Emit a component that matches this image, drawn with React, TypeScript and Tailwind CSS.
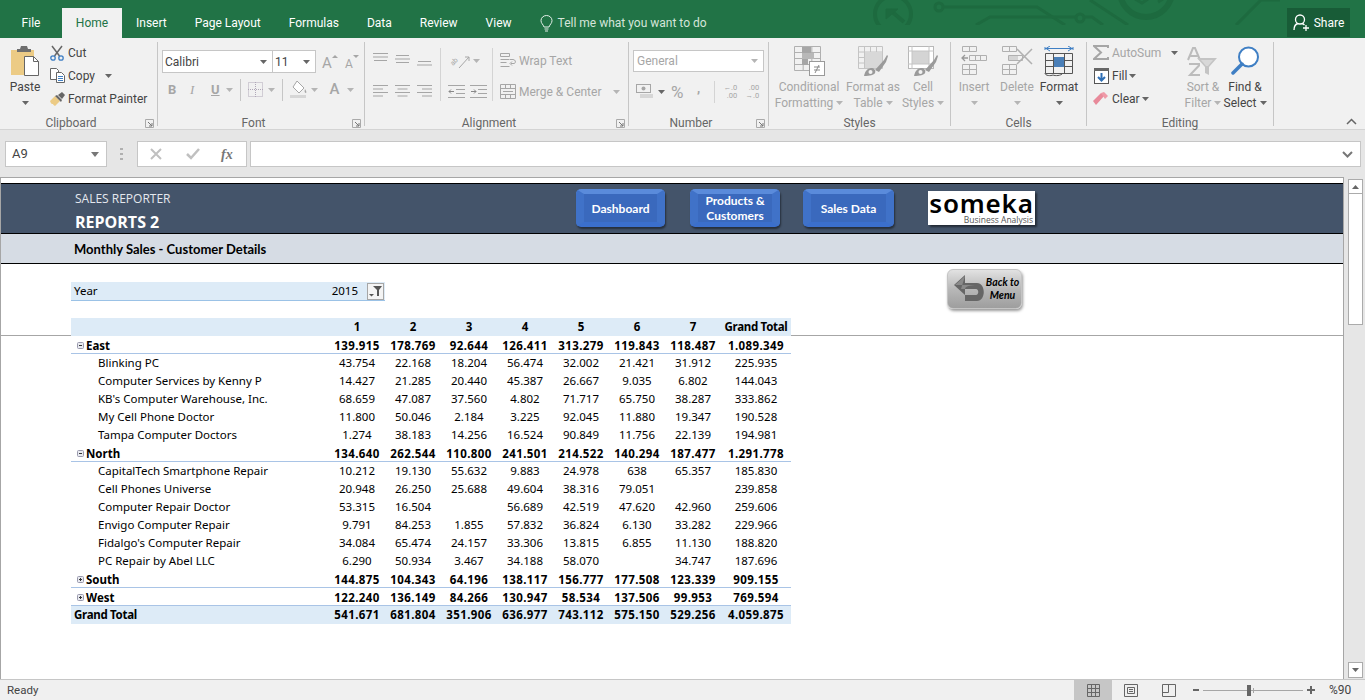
import type { ReactNode } from "react"

type Row = { name: string; vals: string[]; total: string; kind: "region" | "item"; open?: boolean }

const rows: Row[] = [
  { name: "East", vals: ["139.915", "178.769", "92.644", "126.411", "313.279", "119.843", "118.487"], total: "1.089.349", kind: "region", open: true },
  { name: "Blinking PC", vals: ["43.754", "22.168", "18.204", "56.474", "32.002", "21.421", "31.912"], total: "225.935", kind: "item" },
  { name: "Computer Services by Kenny P", vals: ["14.427", "21.285", "20.440", "45.387", "26.667", "9.035", "6.802"], total: "144.043", kind: "item" },
  { name: "KB's Computer Warehouse, Inc.", vals: ["68.659", "47.087", "37.560", "4.802", "71.717", "65.750", "38.287"], total: "333.862", kind: "item" },
  { name: "My Cell Phone Doctor", vals: ["11.800", "50.046", "2.184", "3.225", "92.045", "11.880", "19.347"], total: "190.528", kind: "item" },
  { name: "Tampa Computer Doctors", vals: ["1.274", "38.183", "14.256", "16.524", "90.849", "11.756", "22.139"], total: "194.981", kind: "item" },
  { name: "North", vals: ["134.640", "262.544", "110.800", "241.501", "214.522", "140.294", "187.477"], total: "1.291.778", kind: "region", open: true },
  { name: "CapitalTech Smartphone Repair", vals: ["10.212", "19.130", "55.632", "9.883", "24.978", "638", "65.357"], total: "185.830", kind: "item" },
  { name: "Cell Phones Universe", vals: ["20.948", "26.250", "25.688", "49.604", "38.316", "79.051", ""], total: "239.858", kind: "item" },
  { name: "Computer Repair Doctor", vals: ["53.315", "16.504", "", "56.689", "42.519", "47.620", "42.960"], total: "259.606", kind: "item" },
  { name: "Envigo Computer Repair", vals: ["9.791", "84.253", "1.855", "57.832", "36.824", "6.130", "33.282"], total: "229.966", kind: "item" },
  { name: "Fidalgo's Computer Repair", vals: ["34.084", "65.474", "24.157", "33.306", "13.815", "6.855", "11.130"], total: "188.820", kind: "item" },
  { name: "PC Repair by Abel LLC", vals: ["6.290", "50.934", "3.467", "34.188", "58.070", "", "34.747"], total: "187.696", kind: "item" },
  { name: "South", vals: ["144.875", "104.343", "64.196", "138.117", "156.777", "177.508", "123.339"], total: "909.155", kind: "region" },
  { name: "West", vals: ["122.240", "136.149", "84.266", "130.947", "58.534", "137.506", "99.953"], total: "769.594", kind: "region" },
]

const grandTotal = ["541.671", "681.804", "351.906", "636.977", "743.112", "575.150", "529.256"]

function Caret({ dark }: { dark?: boolean }) {
  return (
    <svg width="7" height="4" viewBox="0 0 7 4" className="shrink-0">
      <path d="M0 0h7L3.500 4z" fill={dark ? "#666" : "#b5b5b5"} />
    </svg>
  )
}

function Group({ width, label, launcher, children }: { width: string; label: string; launcher?: boolean; children: ReactNode }) {
  return (
    <div className={`${width} h-[84px] mt-1 shrink-0 flex flex-col border-r border-[#c6c6c6]`}>
      <div className="h-[77px] flex">{children}</div>
      <div className="h-[7px] flex items-center relative">
        <span className={`w-full text-center text-[12px] leading-4 text-[#666] ${launcher ? "pr-[15px]" : ""}`}>{label}</span>
        {launcher && (
          <svg width="9" height="9" viewBox="0 0 9 9" className="absolute right-[3px] top-0">
            <path d="M.5 8.500V.5h8v8z" fill="none" stroke="#aaa" />
            <path d="M3 3l4 4M7 4v3H4" fill="none" stroke="#777" />
          </svg>
        )}
      </div>
    </div>
  )
}

function Big({ width, icon, lines, on }: { width: string; icon: ReactNode; lines: string[]; on?: boolean }) {
  return (
    <div className={`${width} shrink-0 flex flex-col items-center ${on ? "text-[#444]" : "text-[#a6a6a6]"}`}>
      <div className="h-[33px] mt-[4px] flex items-start justify-center">{icon}</div>
      <div className="text-[12px] leading-4 whitespace-nowrap">{lines[0]}</div>
      {lines[1] ? (
        <div className="text-[12px] leading-4 whitespace-nowrap flex items-center gap-[3px]">
          {lines[1]}
          <Caret dark={on} />
        </div>
      ) : (
        <div className="h-4 flex items-center"><Caret dark={on} /></div>
      )}
    </div>
  )
}

function AlignIcon({ widths, align }: { widths: number[]; align: "l" | "c" | "r" }) {
  return (
    <svg width="15" height={widths.length * 3.5} viewBox={`0 0 15 ${widths.length * 3.5}`}>
      {widths.map((w, i) => {
        const x = align === "c" ? (15 - w) / 2 : align === "r" ? 15 - w : 0
        return <rect key={i} x={x} y={i * 3.5} width={w} height="1" fill="#a6a6a6" />
      })}
    </svg>
  )
}

function GridIcon({ w, h, cols, rows: r, color = "#b0b0b0" }: { w: number; h: number; cols: number; rows: number; color?: string }) {
  const lines = []
  for (let i = 0; i <= cols; i++) lines.push(`M${0.5 + (i * (w - 1)) / cols} .5V${h - 0.5}`)
  for (let i = 0; i <= r; i++) lines.push(`M.5 ${0.5 + (i * (h - 1)) / r}H${w - 0.5}`)
  return <path d={lines.join("")} fill="none" stroke={color} />
}

function Brush() {
  return (
    <g>
      <path d="M17 24l9-10 3-5 1 1-2 6-7 10z" fill="#9a9a9a" />
      <path d="M6 30c1-4 2-7 7-8 3 0 5 2 4 5-1 2-5 3-11 3z" fill="#9a9a9a" />
      <circle cx="12.500" cy="26" r="2" fill="#f1f1f1" />
    </g>
  )
}

function RibbonBar() {
  return (
    <div className="h-[92px] bg-[#f1f1f1] flex border-b border-[#d4d4d4] text-[#444]">
      <Group width="w-[158px]" label="Clipboard" launcher>
        <div className="w-[50px] shrink-0 flex flex-col items-center">
          <svg width="30" height="30" viewBox="0 0 30 30" className="mt-[4px]">
            <path d="M1 4h23v25H1z" fill="#eccb85" />
            <path d="M7 3h3l1-3h6l1 3h3v3H7z" fill="#6e6e6e" />
            <path d="M14.500 10.500h9l5 5v14h-14z" fill="#fff" stroke="#666" />
            <path d="M23.500 10.500v5h5" fill="none" stroke="#666" />
          </svg>
          <div className="text-[12px] leading-4 mt-[3px]">Paste</div>
          <div className="mt-[6px]"><Caret dark /></div>
        </div>
        <div className="flex flex-col text-[12px] leading-4 -mt-px">
          <div className="h-[23px] flex items-center gap-[4px]">
            <svg width="14" height="16" viewBox="0 0 14 16">
              <path d="M2 1l7.500 10M12 1L4.500 11" stroke="#666" strokeWidth="1.500" fill="none" />
              <circle cx="3" cy="13" r="2.200" fill="none" stroke="#3f7fc4" strokeWidth="1.300" />
              <circle cx="11" cy="13" r="2.200" fill="none" stroke="#3f7fc4" strokeWidth="1.300" />
            </svg>
            Cut
          </div>
          <div className="h-[23px] flex items-center gap-[3px]">
            <svg width="15" height="15" viewBox="0 0 15 15">
              <path d="M.5.5h6l2 2v9H.5z" fill="#fff" stroke="#666" />
              <path d="M6.500 4.500h5l3 3v7h-8z" fill="#fff" stroke="#666" />
              <path d="M8 8.500h5M8 10.500h5M8 12.500h5" stroke="#3f7fc4" />
            </svg>
            Copy
            <span className="ml-[7px]"><Caret dark /></span>
          </div>
          <div className="h-[23px] flex items-center gap-[3px] whitespace-nowrap">
            <svg width="15" height="14" viewBox="0 0 15 14">
              <path d="M0 9l5-5 5 5-5 5c-1-1-2-1-2-2-1 0-2 0-3-3z" fill="#eccb85" />
              <path d="M5 4l2-1 5 5-1 2z" fill="#666" />
              <path d="M8 3l4-3 3 3-3 4z" fill="#666" />
            </svg>
            Format Painter
          </div>
        </div>
      </Group>

      <Group width="w-[207px]" label="Font" launcher>
        <div className="flex flex-col pl-1 text-[#a6a6a6]">
          <div className="h-[23px] mt-[8px] flex items-center">
            <div className="w-[111px] h-[23px] bg-white border border-[#c6c6c6] flex items-center justify-between pl-[2px] pr-[5px] text-[12px] text-[#444]">
              Calibri <Caret dark />
            </div>
            <div className="w-[44px] h-[23px] -ml-[1px] bg-white border border-[#c6c6c6] flex items-center justify-between pl-[2px] pr-[5px] text-[12px] text-[#444]">
              11 <Caret dark />
            </div>
            <svg width="40" height="20" viewBox="0 0 40 20" className="ml-[5px]">
              <text x="1" y="16" fontSize="15" fill="#a6a6a6" fontFamily="Roboto, sans-serif">A</text>
              <path d="M11 6l3-3 3 3z" fill="#a6a6a6" />
              <text x="24" y="16" fontSize="12" fill="#a6a6a6" fontFamily="Roboto, sans-serif">A</text>
              <path d="M32 3h6l-3 3z" fill="#a6a6a6" />
            </svg>
          </div>
          <div className="h-[23px] mt-[5px] flex items-center text-[#a6a6a6]">
            <span className="w-[13px] ml-[6px] text-[13px] font-bold">B</span>
            <span className="w-[13px] ml-[9px] text-[13px] italic" style={{ fontFamily: "Liberation Serif, serif" }}>I</span>
            <span className="ml-[8px] text-[13px] font-bold underline">U</span>
            <span className="ml-[6px]"><Caret /></span>
            <div className="w-px h-[22px] bg-[#c6c6c6] ml-[7px]" />
            <svg width="15" height="15" viewBox="0 0 15 15" className="ml-[7px]">
              <rect x=".5" y=".5" width="14" height="14" fill="none" stroke="#b0a8b8" strokeDasharray="1 1" />
              <path d="M7.500 0v15M0 7.500h15" stroke="#b0a8b8" strokeDasharray="1 1" />
            </svg>
            <span className="ml-[5px]"><Caret /></span>
            <div className="w-px h-[22px] bg-[#c6c6c6] ml-[7px]" />
            <svg width="17" height="19" viewBox="0 0 17 19" className="ml-[7px]">
              <path d="M7 1l7 7-5 5-6-6z" fill="#fff" stroke="#a6a6a6" />
              <path d="M15 9c1 2 2 3 1 4-1 0-2-1-1-4z" fill="#a6a6a6" />
              <rect y="15" width="16" height="3" fill="#d6d6d6" />
            </svg>
            <span className="ml-[4px]"><Caret /></span>
            <span className="ml-[12px] text-[15px] font-medium">A</span>
            <span className="ml-[7px]"><Caret /></span>
          </div>
        </div>
      </Group>

      <Group width="w-[264px]" label="Alignment" launcher>
        <div className="w-[75px] shrink-0 pl-2 flex flex-col">
          <div className="h-[17px] mt-[10px] flex items-center gap-[7px]">
            <div className="h-[15px] flex items-start"><AlignIcon widths={[15, 15, 13]} align="c" /></div>
            <div className="h-[15px] flex items-center"><AlignIcon widths={[13, 15, 13]} align="c" /></div>
            <div className="h-[15px] flex items-end"><AlignIcon widths={[13, 15]} align="c" /></div>
          </div>
          <div className="h-[17px] mt-[14px] flex items-center gap-[7px]">
            <AlignIcon widths={[15, 10, 15, 10]} align="l" />
            <AlignIcon widths={[15, 10, 15, 10]} align="c" />
            <AlignIcon widths={[15, 10, 15, 10]} align="r" />
          </div>
        </div>
        <div className="w-px h-[53px] mt-[6px] bg-[#d4d4d4]" />
        <div className="w-[51px] shrink-0 pl-[7px] flex flex-col">
          <div className="h-[17px] mt-[10px] flex items-center gap-[3px]">
            <svg width="22" height="18" viewBox="0 0 22 18">
              <text x="2" y="11" fontSize="7" fill="#a6a6a6" transform="rotate(-45 7 9)" fontFamily="Roboto, sans-serif">ab</text>
              <path d="M11 16L21 5M17 5h4v4" fill="none" stroke="#a6a6a6" />
            </svg>
            <Caret />
          </div>
          <div className="h-[17px] mt-[14px] flex items-center gap-[5px]">
            <svg width="17" height="13" viewBox="0 0 17 13"><path d="M0 .5h17M8 4.500h9M8 8.500h9M0 12.500h17" stroke="#a6a6a6" /><path d="M6 6.500H1M3 4.500l-2 2 2 2" fill="none" stroke="#888" /></svg>
            <svg width="17" height="13" viewBox="0 0 17 13"><path d="M0 .5h17M8 4.500h9M8 8.500h9M0 12.500h17" stroke="#a6a6a6" /><path d="M1 6.500h5M4 4.500l2 2-2 2" fill="none" stroke="#888" /></svg>
          </div>
        </div>
        <div className="w-px h-[53px] mt-[6px] bg-[#d4d4d4]" />
        <div className="pl-[7px] flex flex-col text-[#a6a6a6] text-[12px]">
          <div className="h-[17px] mt-[10px] flex items-center gap-[3px] whitespace-nowrap">
            <svg width="16" height="15" viewBox="0 0 16 15"><path d="M.5.500h9v3h-9zM.5 6.500h9M.5 9.500h6M.5 13.500h9" fill="none" stroke="#a6a6a6" /><path d="M11 10.500h3c2 0 2-4-1-4h-3M12 8.500l-2 2 2 2" fill="none" stroke="#a6a6a6" /></svg>
            Wrap Text
          </div>
          <div className="h-[17px] mt-[14px] flex items-center gap-[3px] whitespace-nowrap">
            <svg width="16" height="15" viewBox="0 0 16 15"><path d="M.5.500h15v14H.5zM.5 4.500h15M.5 10.500h15M5.500.500v4M10.500.500v4M5.500 10.500v4M10.500 10.500v4M3 7.500h10" fill="none" stroke="#a6a6a6" /></svg>
            Merge &amp; Center
            <span className="ml-[9px]"><Caret /></span>
          </div>
        </div>
      </Group>

      <Group width="w-[140px]" label="Number" launcher>
        <div className="flex flex-col pl-[4px]">
          <div className="w-[131px] h-[22px] mt-[8px] bg-white border border-[#c6c6c6] flex items-center justify-between pl-[3px] pr-[5px] text-[12px] text-[#a6a6a6]">
            General <Caret />
          </div>
          <div className="h-[23px] mt-[8px] flex items-center text-[#a6a6a6]">
            <svg width="17" height="15" viewBox="0 0 17 15" className="ml-[3px]"><rect x=".5" y=".5" width="14" height="8" fill="none" stroke="#a6a6a6" /><circle cx="7.500" cy="4.500" r="2" fill="#a6a6a6" /><path d="M4 11h13M4 13h13" stroke="#bbb" /></svg>
            <span className="ml-[5px]"><Caret dark /></span>
            <span className="w-[17px] ml-[6px] text-[17px] leading-5">%</span>
            <span className="ml-[9px] -mt-[5px] text-[13px] font-bold">,</span>
            <div className="w-px h-[22px] bg-[#d4d4d4] ml-[14px]" />
            <span className="ml-[7px] w-[15px] text-[7.5px] leading-[8px] text-right whitespace-nowrap">←.0<br />.00</span>
            <span className="ml-[7px] w-[15px] text-[7.5px] leading-[8px] text-right whitespace-nowrap">.00<br />→.0</span>
          </div>
        </div>
      </Group>

      <Group width="w-[182px]" label="Styles">
        <Big width="w-[80px]" lines={["Conditional", "Formatting"]} icon={
          <svg width="31" height="30" viewBox="0 0 31 30">
            <GridIcon w={27} h={25} cols={3} rows={4} />
            <rect x="8" y="1" width="9" height="6" fill="#a6a6a6" />
            <rect x="8" y="7" width="12" height="6" fill="#b8b8b8" />
            <rect x="8" y="13" width="6" height="6" fill="#a6a6a6" />
            <rect x="15.500" y="15.500" width="15" height="14" fill="#fff" stroke="#999" />
            <path d="M20 21h6M20 24h6M25 19l-4 8" stroke="#888" fill="none" />
          </svg>
        } />
        <Big width="w-[48px]" lines={["Format as", "Table"]} icon={
          <svg width="30" height="31" viewBox="0 0 30 31">
            <GridIcon w={25} h={23} cols={4} rows={4} color="#c4c4c4" />
            <rect x="7" y="6" width="17" height="16" fill="#d8d8d8" />
            <Brush />
          </svg>
        } />
        <Big width="w-[52px]" lines={["Cell", "Styles"]} icon={
          <svg width="30" height="31" viewBox="0 0 30 31">
            <rect x=".5" y=".5" width="25" height="22" fill="#fff" stroke="#b8b8b8" />
            <rect x="4" y="5" width="17" height="13" fill="#d4d4d4" />
            <path d="M0 5h26M4 0v23M21 0v23M0 18h26" stroke="#c4c4c4" fill="none" />
            <Brush />
          </svg>
        } />
      </Group>

      <Group width="w-[136px]" label="Cells">
        <Big width="w-[46px]" lines={["Insert", ""]} icon={
          <svg width="28" height="30" viewBox="0 0 28 30">
            <path d="M2.500.5h14v5h-14zM9.500.5v5M9.500 9.500h17v5h-17zM15.500 9.500v5M20.500 9.500v5M2.500 18.500h14v10h-14zM2.500 23.500h14M9.500 18.500v10" fill="none" stroke="#b0b0b0" />
            <path d="M8 12h-6M5 9l-3 3 3 3" fill="none" stroke="#999" strokeWidth="1.300" />
          </svg>
        } />
        <Big width="w-[40px]" lines={["Delete", ""]} icon={
          <svg width="31" height="30" viewBox="0 0 31 30">
            <path d="M.5.5h14v5H.5zM7.500.5v5M6.500 9.500h14v5h-14zM.5 18.500h14v10H.5zM.5 23.500h14M7.500 18.500v10" fill="none" stroke="#b0b0b0" />
            <rect x="7" y="10" width="9" height="4" fill="#d4d4d4" />
            <path d="M15 3l15 15M30 3L15 18" stroke="#b0b0b0" strokeWidth="1.500" />
          </svg>
        } />
        <Big width="w-[44px]" on lines={["Format", ""]} icon={
          <svg width="30" height="31" viewBox="0 0 30 31">
            <path d="M1 2.500h28M1 1v3M29 1v3M6 0L2 2.500 6 5M24 0l4 2.500L24 5" fill="none" stroke="#3f7fc4" />
            <path d="M1.500 7.500h27v20h-27zM1 14.500h28M1 20.500h28M9.500 7.500v20M20.500 7.500v20" fill="none" stroke="#555" />
            <rect x="10" y="11" width="10" height="10" fill="#4a7fb8" />
            <path d="M1 27c0 3 6 3 8 2 2 1 8 1 10-2" fill="none" stroke="#555" />
          </svg>
        } />
      </Group>

      <Group width="w-[187px]" label="Editing">
        <div className="w-[95px] shrink-0 pl-[6px] flex flex-col text-[12px] -mt-px">
          <div className="h-[23px] flex items-center text-[#a6a6a6] whitespace-nowrap">
            <svg width="16" height="15" viewBox="0 0 16 15" className="shrink-0"><path d="M15 3V1H1l7 6.500L1 14h14v-2" fill="none" stroke="#a6a6a6" strokeWidth="2" /></svg>
            <span className="ml-[3px]">AutoSum</span>
            <span className="ml-[10px]"><Caret dark /></span>
          </div>
          <div className="h-[23px] flex items-center text-[#444]">
            <svg width="15" height="16" viewBox="0 0 15 16" className="shrink-0 ml-[1px]">
              <rect x=".5" y=".5" width="14" height="15" fill="#fff" stroke="#555" />
              <rect width="15" height="3" fill="#666" />
              <path d="M7.500 5v7M4 9l3.500 3.500L11 9" fill="none" stroke="#2f6fb5" strokeWidth="2" />
            </svg>
            <span className="ml-[3px]">Fill</span>
            <span className="ml-[2px]"><Caret dark /></span>
          </div>
          <div className="h-[23px] flex items-center text-[#444]">
            <svg width="15" height="14" viewBox="0 0 15 14" className="shrink-0">
              <path d="M0 9l8-8 4 2-9 10z" fill="#e88a9a" />
              <path d="M8 1l3-1 4 4-3 3z" fill="#ef9aa8" />
            </svg>
            <span className="ml-[4px]">Clear</span>
            <span className="ml-[2px]"><Caret dark /></span>
          </div>
        </div>
        <Big width="w-[42px]" lines={["Sort &", "Filter"]} icon={
          <svg width="32" height="32" viewBox="0 0 32 32">
            <path d="M1 14L6 2h2l5 12M3.500 10h7M2 18h10v1.500L3 29h10" fill="none" stroke="#bcbcbc" strokeWidth="2" />
            <path d="M10 12h20l-8 9v8l-4-2v-6z" fill="#c4c4c4" />
            <path d="M14 14h12l-5 6h-2z" fill="#d8d8d8" />
          </svg>
        } />
        <Big width="w-[42px]" on lines={["Find &", "Select"]} icon={
          <svg width="28" height="30" viewBox="0 0 28 30">
            <circle cx="17.500" cy="11" r="9.500" fill="#fff" stroke="#3f7fc4" strokeWidth="2" />
            <path d="M11 18L2 27" stroke="#3f7fc4" strokeWidth="3.500" strokeLinecap="round" />
          </svg>
        } />
      </Group>

      <div className="flex-1 relative">
        <svg width="11" height="7" viewBox="0 0 11 7" className="absolute right-[8px] top-[80px]">
          <path d="M1 6l4.500-4.500L10 6" fill="none" stroke="#666" strokeWidth="1.500" />
        </svg>
      </div>
    </div>
  )
}

function TitleBar() {
  const tabs = ["Insert", "Page Layout", "Formulas", "Data", "Review", "View"]
  return (
    <div className="h-[38px] bg-[#217346] flex relative text-white text-[12px]">
      <svg width="440" height="25" viewBox="840 0 440 25" className="absolute left-[840px] top-0">
        <g fill="none" stroke="#1d6a3f" strokeWidth="3">
          <circle cx="893" cy="14" r="18" strokeWidth="4" />
          <path d="M890 10l14 12" strokeWidth="4" />
          <path d="M886 9h12l-12 10z" fill="#1d6a3f" strokeWidth="1" />
          <circle cx="939" cy="7" r="4" />
          <path d="M943 7h94l28 18" />
          <path d="M976 25l14-8h86" />
          <circle cx="1080" cy="18" r="4" />
          <path d="M1084 17h8l11 8" />
          <path d="M1090 0l38 25" />
          <circle cx="1146" cy="-9" r="26" strokeWidth="6" />
          <path d="M1135 -1l7 4 6-4M1158 2l5-3" strokeWidth="3" />
          <path d="M1236 25l25-25h20" />
        </g>
      </svg>
      <div className="w-[62px] flex items-center justify-center pt-[8px] relative">File</div>
      <div className="w-[60px] mt-[8px] bg-[#f1f1f1] text-[#217346] flex items-center justify-center relative">Home</div>
      {tabs.map((t) => (
        <div key={t} className="px-[14px] first:pl-[15px] flex items-center pt-[8px] relative whitespace-nowrap">{t}</div>
      ))}
      <div className="flex items-center gap-[5px] pt-[8px] ml-[14px] text-[#d5e5da] relative whitespace-nowrap">
        <svg width="13" height="17" viewBox="0 0 13 17">
          <path d="M4 12C3 9 1 8.500 1 5.500a5.500 5 0 0 1 11 0c0 3-2 3.500-3 6.500zM4.500 14h4M5 16h3" fill="none" stroke="#e6f0ea" />
        </svg>
        Tell me what you want to do
      </div>
      <div className="absolute right-[15px] top-[8px] w-[63px] h-[29px] bg-[#185c37] flex items-center justify-center gap-[4px]">
        <svg width="17" height="17" viewBox="0 0 17 17">
          <circle cx="7" cy="5.500" r="4.500" fill="none" stroke="#fff" strokeWidth="1.300" />
          <path d="M1 16c0-4 2-6 4-6.500M9 9.500c1 .2 2 1 2.500 1.500M10 14h6M13 11v6" fill="none" stroke="#fff" strokeWidth="1.300" />
        </svg>
        Share
      </div>
    </div>
  )
}

function FormulaBar() {
  return (
    <div className="h-[47px] bg-[#e6e6e6] flex items-start pt-[11px] pl-[5px] text-[13px]">
      <div className="w-[102px] h-[26px] bg-white border border-[#c6c6c6] flex items-center justify-between pl-[6px] pr-[7px] text-[#444]">
        A9
        <svg width="8" height="5" viewBox="0 0 8 5"><path d="M0 0h8L4 5z" fill="#777" /></svg>
      </div>
      <svg width="3" height="12" viewBox="0 0 3 12" className="ml-[13px] mt-[7px]">
        <path d="M0 0h3v2H0zM0 5h3v2H0zM0 10h3v2H0z" fill="#b0b0b0" />
      </svg>
      <div className="w-[110px] h-[26px] ml-[14px] bg-white border border-[#c6c6c6] flex items-center">
        <svg width="12" height="12" viewBox="0 0 12 12" className="ml-[12px]">
          <path d="M1 1l10 10M11 1L1 11" stroke="#c0c0c0" strokeWidth="2" />
        </svg>
        <svg width="14" height="12" viewBox="0 0 14 12" className="ml-[24px]">
          <path d="M1 6l4 4 8-9" fill="none" stroke="#c0c0c0" strokeWidth="2.500" />
        </svg>
        <span className="ml-[21px] text-[14px] italic font-bold text-[#777]" style={{ fontFamily: "Liberation Serif, serif" }}>fx</span>
      </div>
      <div className="w-[1111px] h-[26px] ml-[3px] bg-white border border-[#c6c6c6] flex items-center justify-end pr-[7px]">
        <svg width="11" height="7" viewBox="0 0 11 7"><path d="M1 1l4.500 4.500L10 1" fill="none" stroke="#777" strokeWidth="2" /></svg>
      </div>
    </div>
  )
}

function NavButton({ width, children }: { width: string; children: ReactNode }) {
  return (
    <div
      className={`${width} h-[38px] rounded-[5px] border-t-[5px] border-b-[5px] border-x-[8px] border-t-[#5a8bdb] border-b-[#3b6fcc] border-x-[#4072c8] bg-[#3a69bd] shadow-[1px_2px_2px_rgba(0,0,0,0.45)] flex items-center justify-center text-center text-white text-[12px] font-bold leading-[15px] whitespace-nowrap`}
      style={{ fontFamily: "Lato, sans-serif" }}
    >
      <span>{children}</span>
    </div>
  )
}

function Expander({ open }: { open?: boolean }) {
  return (
    <svg width="7" height="7" viewBox="0 0 7 7" className="shrink-0">
      <rect x=".5" y=".5" width="6" height="6" rx="1" fill="#e8eaf0" stroke="#9a9aae" />
      <path d={open ? "M2 3.500h3" : "M2 3.500h3M3.500 2v3"} stroke="#333" />
    </svg>
  )
}

const cols = "grid grid-cols-[258px_repeat(7,56px)_70px] w-[720px] h-[18px] items-center"

function PivotTable() {
  return (
    <div className="text-[11.5px] text-black" style={{ fontFamily: "'Noto Sans', sans-serif" }}>
      <div className="border-b border-[#a6a6a6] pl-[70px] h-[18px]">
        <div className={`${cols} bg-[#ddebf7] font-bold`}>
          <span />
          {[1, 2, 3, 4, 5, 6, 7].map((n) => <span key={n} className="text-center">{n}</span>)}
          <span className="text-center whitespace-nowrap tracking-[-0.3px]">Grand Total</span>
        </div>
      </div>
      <div className="pl-[70px]">
        {rows.map((r) => (
          <div key={r.name} className={`${cols} ${r.kind === "region" ? "font-bold border-b border-[#a9c4e6] pt-px" : ""}`}>
            {r.kind === "region" ? (
              <span className="flex items-center gap-[2px] pl-[6px]"><Expander open={r.open} />{r.name}</span>
            ) : (
              <span className="pl-[27px] whitespace-nowrap">{r.name}</span>
            )}
            {r.vals.map((v, i) => <span key={i} className={`text-center ${r.kind === "region" ? "tracking-[0.4px]" : ""}`}>{v}</span>)}
            <span className={`text-center ${r.kind === "region" ? "tracking-[0.4px]" : ""}`}>{r.total}</span>
          </div>
        ))}
        <div className={`${cols} bg-[#ddebf7] font-bold`}>
          <span className="pl-[3px] tracking-[-0.3px]">Grand Total</span>
          {grandTotal.map((v) => <span key={v} className="text-center tracking-[0.4px]">{v}</span>)}
          <span className="text-center tracking-[0.4px]">4.059.875</span>
        </div>
      </div>
    </div>
  )
}

function Sheet() {
  return (
    <div className="w-[1344px] h-[502px] bg-white border-t border-l border-r border-[#a6a6a6] relative overflow-hidden" style={{ fontFamily: "'Open Sans', sans-serif" }}>
      <div className="h-[5px] bg-white" />
      <div className="h-[51px] bg-[#44546a] border-t border-b border-black flex pl-[74px]">
        <div className="w-[501px] shrink-0 text-white">
          <div className="text-[12px] leading-4 mt-[7px] text-[#e4e8ee]">SALES REPORTER</div>
          <div className="text-[16px] leading-5 mt-[5px] font-bold">REPORTS 2</div>
        </div>
        <div className="flex gap-[26px] mt-[5px]">
          <NavButton width="w-[89px]">Dashboard</NavButton>
          <div className="ml-[-1px]"><NavButton width="w-[90px]">Products &amp;<br />Customers</NavButton></div>
          <div className="ml-[-3px]"><NavButton width="w-[91px]">Sales Data</NavButton></div>
        </div>
        <div className="w-[107px] h-[34px] ml-[34px] mt-[7px] bg-white shadow-[2px_2px_2px_rgba(0,0,0,0.5)] flex flex-col items-center">
          <div className="text-[26px] leading-[24px] text-black tracking-[0.8px] font-semibold" style={{ fontFamily: "'Noto Sans', sans-serif" }}>someka</div>
          <div className="self-end pr-[2px] text-[8.5px] leading-[10px] text-[#555]">Business Analysis</div>
        </div>
      </div>
      <div className="h-[30px] bg-[#d6dce4] border-b border-black pl-[73px] pt-[2px] flex items-center text-[13px] font-bold text-black" style={{ fontFamily: "Lato, sans-serif" }}>
        Monthly Sales - Customer Details
      </div>
      <div className="h-[18px]" />
      <div className="pl-[70px] text-[11.5px]" style={{ fontFamily: "'Noto Sans', sans-serif" }}>
        <div className="w-[314px] h-[19px] bg-[#ddebf7] border-b border-[#9bc2e6] flex items-center justify-between pl-[3px] pr-[1px]">
          Year
          <span className="flex items-center gap-[9px]">
            2015
            <span className="w-[17px] h-[17px] bg-[#f4f4f4] border border-[#a6a6a6] flex items-center justify-center">
              <svg width="13" height="12" viewBox="0 0 13 12">
                <path d="M4 1h9L10 5v6H8V5z" fill="#555" />
                <path d="M0 9h5l-2.500 2.500z" fill="#555" />
              </svg>
            </span>
          </span>
        </div>
      </div>
      <div className="h-[17px]" />
      <PivotTable />
      {/* shape floating over the cells */}
      <div className="absolute left-[946px] top-[91px] w-[75px] h-[40px] rounded-[6px] bg-gradient-to-b from-[#e2e2e2] via-[#b8b8b8] to-[#9e9e9e] border border-[#c4c4c4] shadow-[1px_2px_3px_rgba(0,0,0,0.4)] flex items-center">
        <svg width="32" height="28" viewBox="0 0 32 28" className="ml-[5px] shrink-0">
          <path d="M12 0v8h12c9 0 9 18 0 18H12v-6h11c3 0 3-6 0-6H12v6L1 10z" fill="#666" />
          <path d="M12 1L2 10h22c-1 0-12 0-12 4l-4 0z" fill="#8a8a8a" />
        </svg>
        <div className="flex-1 text-center text-[10.5px] leading-[13px] italic font-bold text-black pr-[1px]" style={{ fontFamily: "Lato, sans-serif" }}>Back to<br />Menu</div>
      </div>
    </div>
  )
}

function Scrollbar() {
  return (
    <div className="flex-1 bg-[#e6e6e6] pl-[4px] pt-[2px] flex flex-col">
      <div className="w-[15px] h-[15px] bg-white border border-[#ababab] flex items-center justify-center">
        <svg width="7" height="4" viewBox="0 0 7 4"><path d="M0 4h7L3.500 0z" fill="#666" /></svg>
      </div>
      <div className="w-[15px] h-[132px] -mt-px bg-white border border-[#ababab]" />
      <div className="flex-1" />
      <div className="w-[15px] h-[16px] mb-[1px] bg-white border border-[#ababab] flex items-center justify-center">
        <svg width="7" height="4" viewBox="0 0 7 4"><path d="M0 0h7L3.500 4z" fill="#666" /></svg>
      </div>
    </div>
  )
}

function StatusBar() {
  return (
    <div className="h-[21px] bg-[#f0f0f0] border-t border-[#c6c6c6] flex items-center text-[11.5px] text-[#444]">
      <span className="ml-[7px] pt-px">Ready</span>
      <div className="flex-1" />
      <div className="w-[38px] h-[20px] bg-[#c6c6c6] flex items-center justify-center">
        <svg width="13" height="13" viewBox="0 0 13 13"><path d="M.5.500h12v12H.5zM4.500.500v12M8.500.500v12M.5 4.500h12M.5 8.500h12" fill="none" stroke="#666" /></svg>
      </div>
      <div className="w-[38px] flex items-center justify-center">
        <svg width="14" height="13" viewBox="0 0 14 13"><path d="M.5.500h13v12H.5zM3.500 3.500h7v6h-7zM5 5.500h4M5 7.500h4" fill="none" stroke="#666" /></svg>
      </div>
      <div className="w-[38px] flex items-center justify-center">
        <svg width="14" height="13" viewBox="0 0 14 13"><path d="M.5 12.500V.5h13v12zM.5 8.500h6V.5" fill="none" stroke="#666" /></svg>
      </div>
      <div className="w-[6px] h-[2px] bg-[#666] ml-[5px]" />
      <div className="w-[100px] h-[12px] ml-[4px] flex items-center relative">
        <div className="w-full h-px bg-[#a6a6a6]" />
        <div className="absolute left-[44px] w-[4px] h-[11px] bg-[#666]" />
        <div className="absolute left-[50px] w-px h-[5px] bg-[#a6a6a6]" />
      </div>
      <svg width="8" height="8" viewBox="0 0 8 8" className="ml-[4px]"><path d="M0 4h8M4 0v8" stroke="#666" strokeWidth="2" /></svg>
      <span className="ml-[14px] w-[36px] text-[12px]">%90</span>
    </div>
  )
}

export default function App() {
  return (
    <div className="w-[1365px] h-[700px] overflow-hidden bg-white" style={{ fontFamily: "Roboto, sans-serif" }}>
      <TitleBar />
      <RibbonBar />
      <FormulaBar />
      <div className="flex h-[502px]">
        <Sheet />
        <Scrollbar />
      </div>
      <StatusBar />
    </div>
  )
}
